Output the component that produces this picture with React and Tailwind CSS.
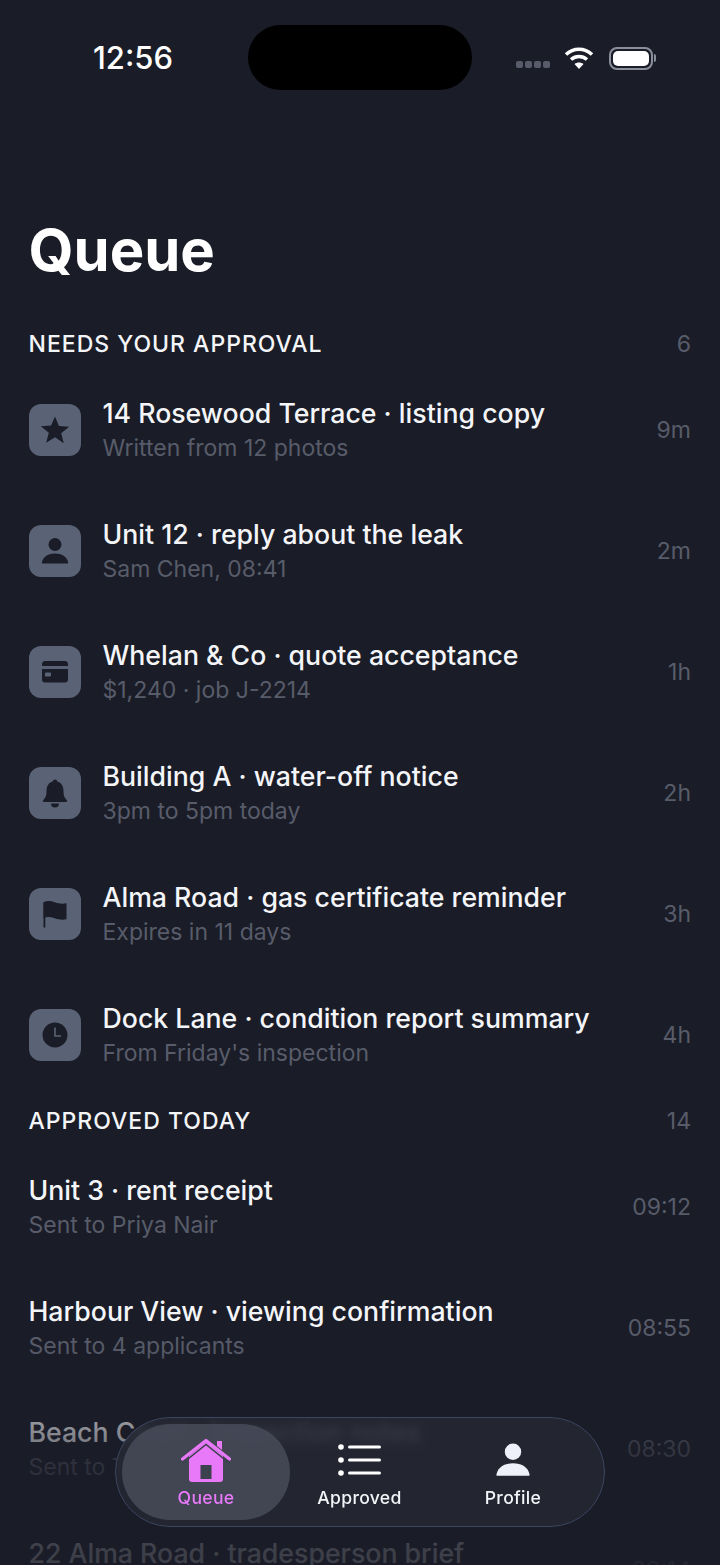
const FONT = "font-['Inter','Noto_Sans',sans-serif]";

function Star() {
  return (
    <svg width="30" height="30" viewBox="0 0 30 30" fill="#1a1c27">
      <path d="M15 1.500l3.900 9.600 10.200.7-7.900 6.500 2.600 10L15 22.300l-8.800 5.500 2.600-10-7.900-6.500 10.200-.7z" />
    </svg>
  );
}
function Person({ color = "#1a1c27", size = 30 }) {
  return (
    <svg width={size} height={size} viewBox="0 0 30 30" fill={color}>
      <circle cx="15" cy="8.500" r="6.500" />
      <path d="M2.800 27.500c-.7 0-1-.5-.9-1.100C3 20.500 8.500 17.500 15 17.500s12 3 13.100 8.900c.1.600-.2 1.100-.9 1.100z" />
    </svg>
  );
}
function Card() {
  return (
    <svg width="30" height="30" viewBox="0 0 30 30" fill="#1a1c27">
      <path d="M5.500 4h19A3 3 0 0 1 28 7v2H2V7a3 3 0 0 1 3.500-3z" />
      <path fillRule="evenodd" d="M2 12h26v10.500a3 3 0 0 1-3 3H5a3 3 0 0 1-3-3zm4 3.500a1 1 0 0 0-1 1v2a1 1 0 0 0 1 1h4a1 1 0 0 0 1-1v-2a1 1 0 0 0-1-1z" />
    </svg>
  );
}
function Bell() {
  return (
    <svg width="30" height="30" viewBox="0 0 30 30" fill="#1a1c27">
      <path d="M15 1.500a2.200 2.200 0 0 1 2.200 2.100C21.500 4.700 23.500 8.400 23.500 13c0 5 1 6.800 3.300 9 .8.800.3 2-.8 2H4c-1.100 0-1.600-1.200-.8-2 2.300-2.200 3.300-4 3.300-9 0-4.600 2-8.300 6.300-9.400A2.200 2.200 0 0 1 15 1.500z" />
      <path d="M11 25.500h8a4 4 0 0 1-8 0z" />
    </svg>
  );
}
function Flag() {
  return (
    <svg width="30" height="30" viewBox="0 0 30 30" fill="#1a1c27">
      <path d="M3.500 3.500h1.800V28.500H3.500z" />
      <path d="M3.500 3.300C6.500 1.800 10 1.600 14 3c4 1.400 8 2.300 12.500 1.300v16c-4.500 1-8.500.2-12.500-1.200-4-1.400-7.500-1.300-10.500.2z" />
    </svg>
  );
}
function Clock() {
  return (
    <svg width="30" height="30" viewBox="0 0 30 30">
      <circle cx="15" cy="15" r="12.500" fill="#1a1c27" />
      <path d="M15 7.500V16h6" fill="none" stroke="#5a6375" strokeWidth="1.600" />
    </svg>
  );
}
function Wifi() {
  return (
    <svg width="30" height="24" viewBox="0 0 30 24" fill="none" stroke="#fff" strokeWidth="3.600">
      <path d="M2 8.500c7.500-7 18.500-7 26 0" />
      <path d="M7 13.500c4.700-4 11.300-4 16 0" />
      <path d="M15 23l-4.500-5c2.700-2 6.300-2 9 0z" fill="#fff" stroke="none" />
    </svg>
  );
}
function House() {
  return (
    <svg width="50" height="45" viewBox="0 0 50 45">
      <path d="M36 3h5v9l-5-4z" fill="#e879f9" />
      <path d="M8 18L25 4l17 14v23a3 3 0 0 1-3 3H11a3 3 0 0 1-3-3z" fill="#e879f9" />
      <path d="M1.500 21L25 2.500 48.500 21" fill="none" stroke="#e879f9" strokeWidth="3.200" strokeLinecap="round" strokeLinejoin="round" />
      <path d="M2 25L25 6.500 48 25" fill="none" stroke="#3d414e" strokeWidth="1.600" />
      <rect x="19.500" y="27" width="11" height="14" fill="#3d414e" />
    </svg>
  );
}
function ListIcon() {
  return (
    <svg width="43" height="32" viewBox="0 0 43 32" fill="#fff">
      <circle cx="3" cy="3" r="2.800" />
      <circle cx="3" cy="16" r="2.800" />
      <circle cx="3" cy="29" r="2.800" />
      <rect x="10" y="1.500" width="33" height="3" rx="1.500" />
      <rect x="10" y="14.500" width="33" height="3" rx="1.500" />
      <rect x="10" y="27.500" width="33" height="3" rx="1.500" />
    </svg>
  );
}

function Row({ icon, title, sub, time }) {
  return (
    <div className={`flex h-[121px] items-center pr-[29px] ${icon ? "pl-[29px]" : "pl-[28.500px]"}`}>
      {icon && (
        <div className="mr-[21.500px] flex h-[52px] w-[52px] shrink-0 items-center justify-center rounded-[12px] bg-[#5a6375]">
          {icon}
        </div>
      )}
      <div className="mt-[1px] min-w-0 flex-1">
        <div className="whitespace-nowrap text-[26.700px] font-medium leading-[34px] text-[#f4f5f8]">{title}</div>
        <div className="mt-[1px] whitespace-nowrap text-[23px] leading-[34px] text-[#585c6a]">{sub}</div>
      </div>
      <div className="mt-[2px] shrink-0 text-[23px] text-[#585c6a]">{time}</div>
    </div>
  );
}

function Section({ label, count }) {
  return (
    <div className="flex items-center justify-between pl-[28.500px] pr-[29px] text-[23px] leading-[30px]">
      <span className="font-medium tracking-[1px] text-[#f4f5f8]">{label}</span>
      <span className="text-[#585c6a]">{count}</span>
    </div>
  );
}

function NavItem({ active, width, icon, label }) {
  return (
    <div
      className={`flex h-[96px] flex-col items-center justify-end rounded-[48px] pb-[10px] ${width} ${
        active ? "bg-[#4a4e5bcc]" : ""
      }`}
    >
      <div className="flex h-[48px] items-center justify-center">{icon}</div>
      <div className={`mt-[2px] text-[17.600px] font-medium leading-[24px] tracking-[0.300px] ${active ? "text-[#e879f9]" : "text-[#f4f5f8]"}`}>
        {label}
      </div>
    </div>
  );
}

export default function App() {
  return (
    <div className={`relative h-[1565px] w-[720px] overflow-hidden bg-[#1a1c27] ${FONT}`}>
      <div className="flex h-[116px] items-start justify-between">
        <div className="ml-[93px] mt-[40px] text-[31px] font-medium leading-[36px] text-white">12:56</div>
        <div className="absolute left-[248px] top-[25px] h-[65px] w-[224px] rounded-[33px] bg-black" />
        <div className="mr-[64px] mt-[46px] flex items-center">
          <div className="mt-[13px] flex gap-[2px]">
            {[0, 1, 2, 3].map((i) => (
              <span key={i} className="h-[7px] w-[7px] rounded-[2px] bg-[#585c6a]" />
            ))}
          </div>
          <div className="ml-[14px]"><Wifi /></div>
          <div className="ml-[15px] flex items-center">
            <div className="h-[23px] w-[44px] rounded-[8px] border-2 border-[#8b8f9b] p-[2px]">
              <div className="h-full w-full rounded-[5px] bg-white" />
            </div>
            <div className="ml-[1px] h-[8px] w-[2px] rounded-r bg-[#8b8f9b]" />
          </div>
        </div>
      </div>

      <h1 className="ml-[28.500px] mt-[98px] text-[58px] font-bold leading-[72px] text-white">Queue</h1>

      <div className="mt-[43px]">
        <Section label="NEEDS YOUR APPROVAL" count="6" />
      </div>
      <div className="mt-[10px]">
        <Row icon={<Star />} title="14 Rosewood Terrace · listing copy" sub="Written from 12 photos" time="9m" />
        <Row icon={<Person />} title="Unit 12 · reply about the leak" sub="Sam Chen, 08:41" time="2m" />
        <Row icon={<Card />} title="Whelan & Co · quote acceptance" sub="$1,240 · job J-2214" time="1h" />
        <Row icon={<Bell />} title="Building A · water-off notice" sub="3pm to 5pm today" time="2h" />
        <Row icon={<Flag />} title="Alma Road · gas certificate reminder" sub="Expires in 11 days" time="3h" />
        <Row icon={<Clock />} title="Dock Lane · condition report summary" sub="From Friday's inspection" time="4h" />
      </div>
      <div className="mt-[11px]">
        <Section label="APPROVED TODAY" count="14" />
      </div>
      <div className="mt-[10px]">
        <Row title="Unit 3 · rent receipt" sub="Sent to Priya Nair" time="09:12" />
        <Row title="Harbour View · viewing confirmation" sub="Sent to 4 applicants" time="08:55" />
        <Row title="Beach Court · inspection notes" sub="Sent to Tom Reid" time="08:30" />
        <Row title="22 Alma Road · tradesperson brief" sub="Sent to Dan Hughes" time="08:14" />
      </div>

      <div className="pointer-events-none absolute bottom-0 left-0 right-0 h-[225px] bg-[linear-gradient(to_bottom,#1a1c2700_0%,#1a1c277d_41%,#1a1c27ad_56%,#1a1c27d6_94%)]" />

      <div className="absolute left-[115px] top-[1417px] flex h-[110px] w-[490px] items-center rounded-[55px] border border-[#3c4660] bg-[#262934d0] px-[6px] backdrop-blur-[4px]">
        <NavItem active width="w-[168px]" icon={<House />} label="Queue" />
        <NavItem width="w-[139px]" icon={<ListIcon />} label="Approved" />
        <NavItem width="w-[168px]" icon={<Person color="#eef0fa" size={38} />} label="Profile" />
      </div>
    </div>
  );
}
